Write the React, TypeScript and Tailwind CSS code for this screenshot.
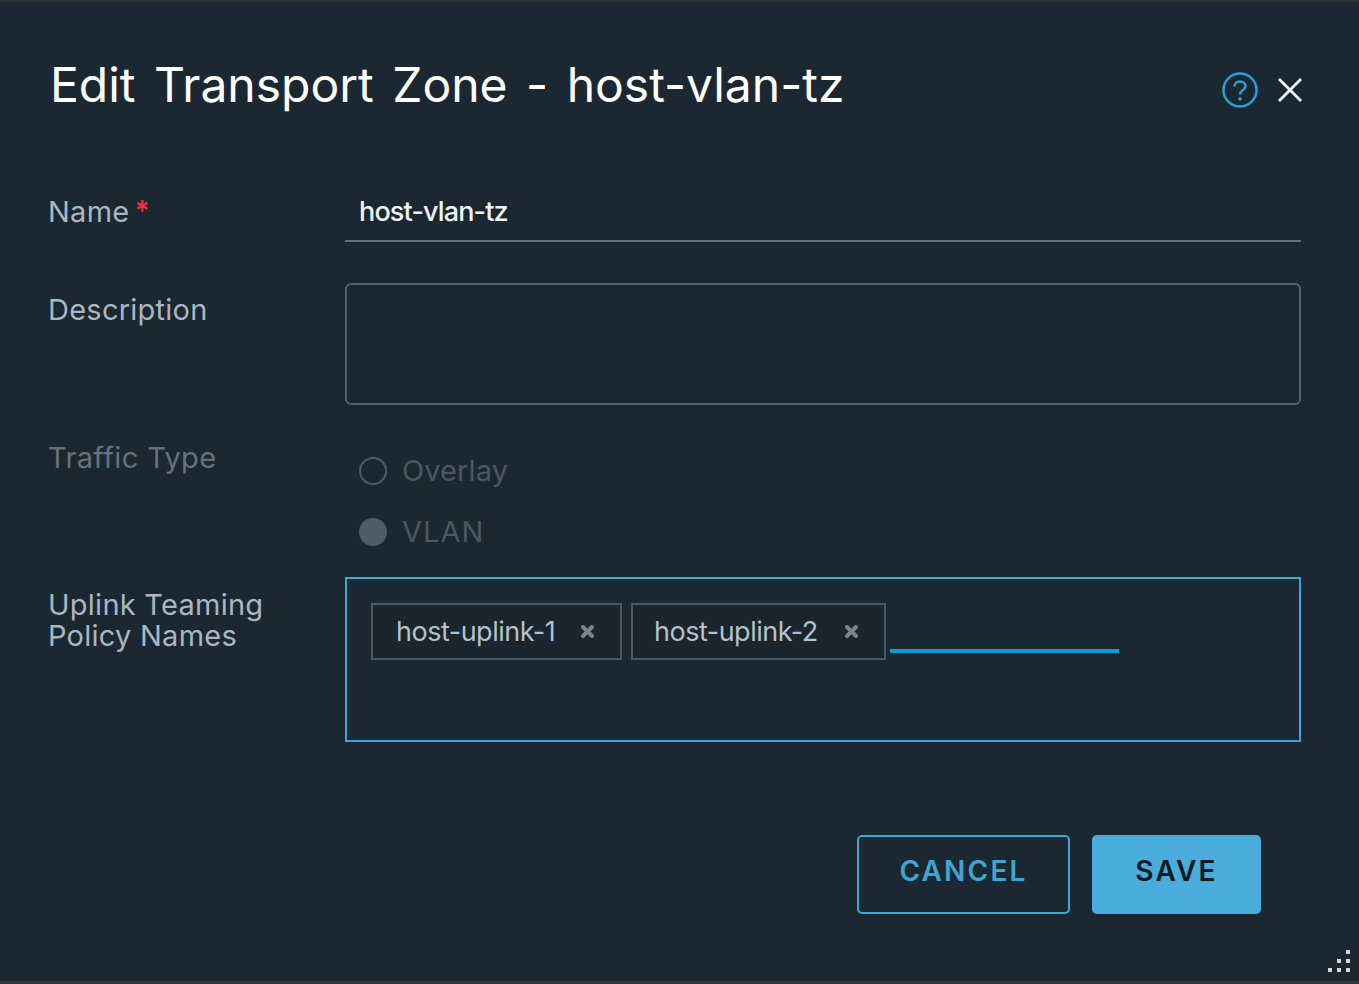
import React from "react";

const labelClass = "text-[29px] leading-[31px] tracking-[0.25px] text-[#a9b7c1]";

const Tag = ({ text, width, inset }: { text: string; width: string; inset: string }) => (
  <div
    className={`flex h-[57px] items-center justify-between border-2 border-[#4c5a65] bg-[#1a252d] pb-[1px] pr-[25px] ${inset} ${width}`}
  >
    <span className="text-[27px] leading-none tracking-[-0.5px] text-[#b4c1ca]">
      {text}
    </span>
    <svg width="15" height="15" viewBox="0 0 15 15" fill="none">
      <path
        d="M3 3L12 12M12 3L3 12"
        stroke="#7b858c"
        strokeWidth="4"
        strokeLinecap="round"
      />
    </svg>
  </div>
);

export default function App() {
  return (
    <div className="relative flex h-[984px] w-[1359px] flex-col overflow-hidden border-t-2 border-b-[3px] border-t-[#2b2f30] border-b-[#303a41] bg-[#1b2832] pl-[48px] pr-[58px] font-['Inter','Liberation_Sans',sans-serif]">
      <div className="flex h-[150px] items-start justify-between">
        <h1 className="ml-[2px] mt-[55px] text-[48px] leading-[56px] font-normal tracking-[0px] [word-spacing:5px] text-white">
          Edit Transport Zone - host-vlan-tz
        </h1>
        <div className="mr-[-2px] mt-[70px] flex items-center gap-[19px]">
          <svg width="36" height="36" viewBox="0 0 36 36" fill="none">
            <circle cx="18" cy="18" r="16.5" stroke="#2b9fd8" strokeWidth="2.5" />
            <path
              d="M12.5 14.5C12.5 11.5 15 9.5 18 9.5C21 9.5 23.5 11.4 23.5 14.2C23.5 18 18 18 18 22.5"
              stroke="#2b9fd8"
              strokeWidth="2.5"
            />
            <circle cx="18" cy="27" r="1.8" fill="#2b9fd8" />
          </svg>
          <svg width="26" height="26" viewBox="0 0 26 26" fill="none">
            <path d="M2 2L24 24M24 2L2 24" stroke="#f2f5f7" strokeWidth="2.8" />
          </svg>
        </div>
      </div>

      <div className="grid grid-cols-[297px_956px]">
        <div className={`${labelClass} pt-[44px]`}>
          Name
          <span className="relative top-[-1px] ml-[5px] text-[28px] font-semibold text-[#f0313a]">
            *
          </span>
        </div>
        <div className="flex h-[90px] items-end border-b-2 border-[#66737d] pb-[11px] pl-[14px] text-[27px] leading-[34px] font-medium tracking-[-0.85px] text-[#eef2f5]">
          host-vlan-tz
        </div>

        <div className={`${labelClass} pt-[52px]`}>Description</div>
        <div className="mt-[41px] h-[122px] rounded-[6px] border-2 border-[#55626c]" />

        <div className="pt-[37px] text-[29px] leading-[31px] tracking-[0.35px] text-[#65727c]">
          Traffic Type
        </div>
        <div className="flex h-[172px] flex-col pl-[14px] pt-[50px] text-[29px] leading-[31px] tracking-[0.1px] text-[#4a5862]">
          <div className="flex items-center gap-[15px]">
            <span className="h-[28px] w-[28px] rounded-full border-2 border-[#4f5c66]" />
            Overlay
          </div>
          <div className="mt-[30px] flex items-center gap-[15px]">
            <span className="h-[28px] w-[28px] rounded-full bg-[#4f5c66]" />
            <span className="tracking-[1px]">VLAN</span>
          </div>
        </div>

        <div className={`${labelClass} pt-[12px]`}>
          Uplink Teaming
          <br />
          Policy Names
        </div>
        <div className="flex h-[165px] items-start border-2 border-[#3fa5d3] pl-[24px] pt-[24px]">
          <Tag text="host-uplink-1" width="w-[251px]" inset="pl-[23px]" />
          <div className="ml-[9px]">
            <Tag text="host-uplink-2" width="w-[255px]" inset="pl-[21px]" />
          </div>
          <div className="ml-[4px] mt-[46px] h-[4px] w-[229px] bg-[#0d9ddb]" />
        </div>
      </div>

      <div className="mr-[40px] mt-[93px] flex justify-end gap-[22px]">
        <button className="h-[79px] w-[213px] rounded-[5px] border-2 border-[#3fa5d3] pb-[8px] text-[28px] font-semibold tracking-[2.2px] text-[#3fa5d3]">
          CANCEL
        </button>
        <button className="h-[79px] w-[169px] rounded-[5px] bg-[#4aacdb] pb-[8px] text-[28px] font-semibold tracking-[2.2px] text-[#0f1a22]">
          SAVE
        </button>
      </div>

      <svg
        className="absolute bottom-[7px] right-[7px]"
        width="24"
        height="24"
        viewBox="0 0 24 24"
        fill="#d5d9dc"
      >
        <rect x="18" y="0" width="4" height="4" />
        <rect x="9" y="9" width="4" height="4" />
        <rect x="18" y="9" width="4" height="4" />
        <rect x="0" y="18" width="4" height="4" />
        <rect x="9" y="18" width="4" height="4" />
        <rect x="18" y="18" width="4" height="4" />
      </svg>
    </div>
  );
}
